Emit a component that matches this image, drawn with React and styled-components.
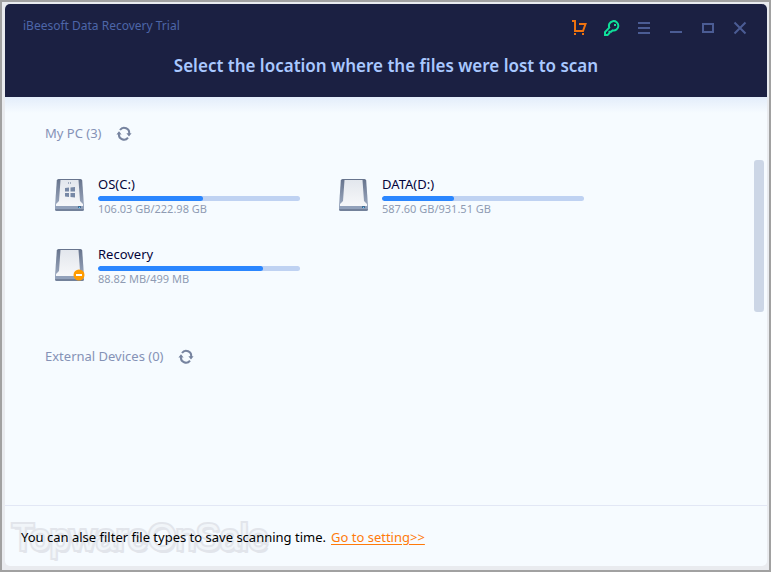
import React from 'react';
import styled, { createGlobalStyle } from 'styled-components';

const GlobalStyle = createGlobalStyle`
  * {
    box-sizing: border-box;
  }

  body {
    margin: 0;
    font-family: "Noto Sans", "Open Sans", sans-serif;
    color: #000;
  }
`;

const Frame = styled.div`
  display: flex;
  min-height: 100vh;
  padding: 2px 2px 4px 3px;
  border: 2px solid #a1a1a1;
  background: #e9ebef;
`;

const AppWindow = styled.div`
  display: flex;
  flex: 1;
  flex-direction: column;
  min-width: 0;
  overflow: hidden;
  border-radius: 5px;
  background: #f6fbff;
`;

const Header = styled.header`
  padding-bottom: 17px;
  background: #1b2042;
`;

const TitleBar = styled.div`
  display: flex;
  justify-content: space-between;
  padding: 8px 11px 0 18px;
`;

const AppName = styled.span`
  padding-top: 4px;
  font-size: 12px;
  line-height: 20px;
  color: #4d66a8;
`;

const WindowButtons = styled.div`
  display: flex;
`;

const IconButton = styled.button`
  display: flex;
  align-items: center;
  justify-content: center;
  width: 32px;
  height: 32px;
  padding: 0;
  border: none;
  background: none;
  color: ${(props) => props.$color || '#4b5c94'};
  cursor: pointer;
`;

const Heading = styled.h1`
  margin: 8px 0 0;
  font-size: 17px;
  font-weight: 600;
  line-height: 28px;
  text-align: center;
  color: #a9c8ff;
`;

const Content = styled.main`
  flex: 1;
  padding: 24px 3px 0 40px;
  background: linear-gradient(#e3edfa, #f6fbff 16px);
`;

const SectionTitle = styled.div`
  display: flex;
  align-items: center;
  gap: 14px;
`;

const SectionName = styled.h2`
  margin: 0;
  font-size: 13px;
  font-weight: 400;
  line-height: 24px;
  color: #8592b6;
`;

const RefreshButton = styled(IconButton)`
  width: 16px;
  height: 16px;
  color: #76839f;
`;

const DriveArea = styled.div`
  display: flex;
  justify-content: space-between;
  align-items: flex-start;
  margin: 15px 0 28px;
`;

const DriveList = styled.ul`
  display: grid;
  grid-template-columns: repeat(2, 284px);
  grid-auto-rows: 70px;
  margin: 0;
  padding: 16px 0 0 10px;
  list-style: none;
`;

const DriveItem = styled.li`
  display: flex;
  align-items: flex-start;
  gap: 13px;

  > svg {
    margin-top: 3px;
  }
`;

const DriveInfo = styled.div`
  width: 202px;
`;

const DriveName = styled.div`
  font-size: 13px;
  line-height: 16px;
  color: #04043a;
`;

const UsageBar = styled.div`
  height: 5px;
  margin-top: 4px;
  overflow: hidden;
  border-radius: 3px;
  background: #bfd2f2;
`;

const UsageFill = styled.div`
  height: 100%;
  border-radius: 3px;
  background: #2a86ff;
`;

const DriveSize = styled.div`
  font-size: 11px;
  line-height: 16px;
  color: #8f9bb3;
`;

const ScrollThumb = styled.div`
  width: 10px;
  height: 152px;
  border-radius: 3px;
  background: #ccd6e6;
`;

const Footer = styled.footer`
  position: relative;
  padding: 21px 16px 19px;
  border-top: 1px solid #e2e7f5;
  font-size: 13px;
  line-height: 20px;
`;

const Watermark = styled.span`
  position: absolute;
  top: 8px;
  left: 7px;
  font-family: "Liberation Sans", sans-serif;
  font-size: 36px;
  line-height: 48px;
  color: #f1f5f9;
  paint-order: stroke;
  -webkit-text-stroke: 4px #e2e5eb;
  text-shadow: 2px 3px 0 #e2e5eb;
  user-select: none;
`;

const FooterText = styled.p`
  position: relative;
  margin: 0;
`;

const SettingLink = styled.a`
  margin-left: 5px;
  color: #ff7a0a;
  text-underline-offset: 2px;
`;

const drives = [
  { name: 'OS(C:)', size: '106.03 GB/222.98 GB', used: 52, type: 'system' },
  { name: 'DATA(D:)', size: '587.60 GB/931.51 GB', used: 35.6, type: 'data' },
  { name: 'Recovery', size: '88.82 MB/499 MB', used: 81.6, type: 'recovery' },
];

function CartIcon() {
  return (
    <svg width="16" height="16" viewBox="0 0 16 16" fill="none" stroke="currentColor" strokeWidth="2">
      <path d="M0 1H3V11H11L13.5 4H7" />
      <path d="M2 14H4M10 14H12" />
    </svg>
  );
}

function KeyIcon() {
  return (
    <svg width="16" height="16" viewBox="0 0 16 16" fill="none" stroke="currentColor" strokeWidth="2">
      <path d="M5.3 7.6A4.7 4.7 0 1 1 8.6 10.4L7.2 11.8H5.4V13.2L3.6 15H1V12.1Z" />
      <path d="M10 5H12" />
    </svg>
  );
}

function MenuIcon() {
  return (
    <svg width="16" height="16" viewBox="0 0 16 16" stroke="currentColor" strokeWidth="2">
      <path d="M2 3H14M2 8H14M2 13H14" />
    </svg>
  );
}

function MinimizeIcon() {
  return (
    <svg width="16" height="16" viewBox="0 0 16 16" stroke="currentColor" strokeWidth="2">
      <path d="M2 12H14" />
    </svg>
  );
}

function MaximizeIcon() {
  return (
    <svg width="16" height="16" viewBox="0 0 16 16" fill="none" stroke="currentColor" strokeWidth="2">
      <rect x="3" y="4" width="10" height="8" />
    </svg>
  );
}

function CloseIcon() {
  return (
    <svg width="16" height="16" viewBox="0 0 16 16" stroke="currentColor" strokeWidth="2">
      <path d="M2.5 2.5L13.5 13.5M13.5 2.5L2.5 13.5" />
    </svg>
  );
}

function RefreshIcon() {
  return (
    <svg width="16" height="16" viewBox="0 0 16 16" fill="none" stroke="currentColor" strokeWidth="2">
      <path d="M4 5A5 5 0 0 1 13 9" />
      <path d="M12 12.6A5 5 0 0 1 3 9" />
      <path d="M10.4 8.2H15.6L13 11.4ZM0.4 9.4H5.6L3 6.2Z" fill="currentColor" stroke="none" />
    </svg>
  );
}

function DriveIcon({ type }) {
  return (
    <svg width="30" height="33" viewBox="0 0 30 33">
      <defs>
        <linearGradient id={`side-${type}`} x1="0" y1="0" x2="0" y2="1">
          <stop offset="0" stopColor="#66738c" />
          <stop offset="1" stopColor="#a5b2c8" />
        </linearGradient>
        <linearGradient id={`top-${type}`} x1="0" y1="0" x2="0" y2="1">
          <stop offset="0" stopColor="#e3e7ed" />
          <stop offset="1" stopColor="#f6f7f9" />
        </linearGradient>
      </defs>
      <path d="M3.5 0H25.5Q27 0 27.2 1.5L29 27V30Q29 32 27.5 32H1.5Q0 32 0 30V27L1.8 1.5Q2 0 3.5 0Z" fill={`url(#side-${type})`} />
      <path d="M5.5 1H23.5L25 22L28 25V27H1V25L4 22Z" fill={`url(#top-${type})`} />
      <path d="M0 27H29V30H0Z" fill="#92a1ba" />
      <path d="M0 30H29Q29 32 27.5 32H1.5Q0 32 0 30Z" fill="#73819a" />
      <rect x="23" y="27" width="3" height="2" fill="#456b92" />
      <rect x="24" y="28" width="1" height="1" fill="#65d2ff" />
      {type === 'system' && (
        <>
          <path d="M13 3H14V5H13ZM15 3H16V5H15Z" fill="#a2adbf" />
          <path d="M10 9L14 8.5V12.5H10ZM15.5 8.5L20 8V12.5H15.5ZM10 14H14V18L10 17.5ZM15.5 14H20V18.5L15.5 18Z" fill="#7788a5" />
        </>
      )}
      {type === 'recovery' && (
        <>
          <circle cx="24" cy="26" r="5.5" fill="#ff9c00" />
          <rect x="21" y="25" width="6" height="2" fill="#fff" />
        </>
      )}
    </svg>
  );
}

function Section({ title }) {
  return (
    <SectionTitle>
      <SectionName>{title}</SectionName>
      <RefreshButton aria-label="Refresh"><RefreshIcon /></RefreshButton>
    </SectionTitle>
  );
}

function Drive({ drive }) {
  return (
    <DriveItem>
      <DriveIcon type={drive.type} />
      <DriveInfo>
        <DriveName>{drive.name}</DriveName>
        <UsageBar>
          <UsageFill style={{ width: `${drive.used}%` }} />
        </UsageBar>
        <DriveSize>{drive.size}</DriveSize>
      </DriveInfo>
    </DriveItem>
  );
}

function App() {
  return (
    <>
      <GlobalStyle />
      <Frame>
        <AppWindow>
          <Header>
            <TitleBar>
              <AppName>iBeesoft Data Recovery Trial</AppName>
              <WindowButtons>
                <IconButton $color="#ee720f" aria-label="Buy"><CartIcon /></IconButton>
                <IconButton $color="#0fe09a" aria-label="Register"><KeyIcon /></IconButton>
                <IconButton aria-label="Menu"><MenuIcon /></IconButton>
                <IconButton aria-label="Minimize"><MinimizeIcon /></IconButton>
                <IconButton aria-label="Maximize"><MaximizeIcon /></IconButton>
                <IconButton aria-label="Close"><CloseIcon /></IconButton>
              </WindowButtons>
            </TitleBar>
            <Heading>Select the location where the files were lost to scan</Heading>
          </Header>
          <Content>
            <Section title="My PC (3)" />
            <DriveArea>
              <DriveList>
                {drives.map((drive) => <Drive key={drive.name} drive={drive} />)}
              </DriveList>
              <ScrollThumb />
            </DriveArea>
            <Section title="External Devices (0)" />
          </Content>
          <Footer>
            <Watermark aria-hidden="true">TopwareOnSale</Watermark>
            <FooterText>
              You can alse filter file types to save scanning time.
              <SettingLink href="#setting">Go to setting&gt;&gt;</SettingLink>
            </FooterText>
          </Footer>
        </AppWindow>
      </Frame>
    </>
  );
}

export default App;
